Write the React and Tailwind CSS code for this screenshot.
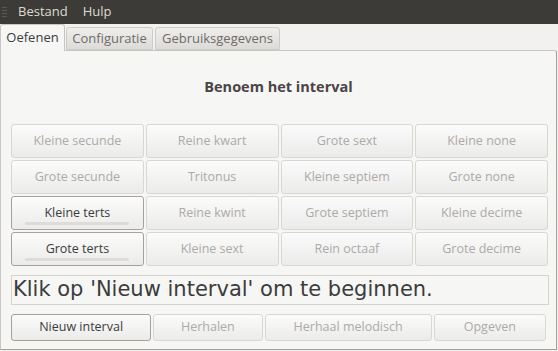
import React from "react";

const intervals = [
  ["Kleine secunde", false],
  ["Reine kwart", false],
  ["Grote sext", false],
  ["Kleine none", false],
  ["Grote secunde", false],
  ["Tritonus", false],
  ["Kleine septiem", false],
  ["Grote none", false],
  ["Kleine terts", true],
  ["Reine kwint", false],
  ["Grote septiem", false],
  ["Kleine decime", false],
  ["Grote terts", true],
  ["Kleine sext", false],
  ["Rein octaaf", false],
  ["Grote decime", false],
];

const actions = [
  ["Nieuw interval", true, "w-[141px]"],
  ["Herhalen", false, "w-[110px]"],
  ["Herhaal melodisch", false, "w-[168px]"],
  ["Opgeven", false, "w-[113px]"],
];

function GtkButton({ label, active, className, bar }) {
  return (
    <div
      className={
        "relative flex items-center justify-center rounded-[3px] border bg-gradient-to-b from-[#fbfbfb] to-[#ebebea] " +
        (active
          ? "border-[#a8a09b] text-[#3c3c3c] "
          : "border-[#dad7d3] text-[#adaaa7] ") +
        (className || "")
      }
    >
      <span>{label}</span>
      {bar && (
        <div className="absolute bottom-[4px] left-[13px] right-[14px] h-[3px] rounded-full bg-[#dddcda]" />
      )}
    </div>
  );
}

export default function App() {
  return (
    <div
      className="w-[558px] h-[351px] bg-[#f2f1f0] flex flex-col overflow-hidden text-[12.5px]"
      style={{ fontFamily: "'Open Sans', 'Noto Sans', sans-serif" }}
    >
      {/* Menu bar */}
      <div className="h-[24px] bg-[#3c3b37] flex items-center text-[#dfdbd2] text-[13px]">
        <div className="ml-[2px] w-[5px] h-[12px] flex flex-col justify-between py-[1px]">
          <div className="h-px bg-[#5a5954]" />
          <div className="h-px bg-[#5a5954]" />
          <div className="h-px bg-[#5a5954]" />
          <div className="h-px bg-[#5a5954]" />
        </div>
        <span className="ml-[11px]">Bestand</span>
        <span className="ml-[15px]">Hulp</span>
      </div>

      {/* Tabs */}
      <div className="h-[26px] flex items-end relative z-10">
        <div className="w-[65px] h-[27px] -mb-px flex items-center justify-center bg-[#f6f6f5] border border-b-0 border-[#c9c6c2] rounded-t-[3px] text-[#3c3c3c] text-[13px]">
          Oefenen
        </div>
        <div className="ml-[1px] w-[87px] h-[23px] flex items-center justify-center bg-gradient-to-b from-[#efeeed] to-[#dddbd8] border border-[#cfccc8] rounded-t-[3px] text-[#6e6b68] text-[13px]">
          Configuratie
        </div>
        <div className="ml-[2px] w-[125px] h-[23px] flex items-center justify-center bg-gradient-to-b from-[#efeeed] to-[#dddbd8] border border-[#cfccc8] rounded-t-[3px] text-[#6e6b68] text-[13px]">
          Gebruiksgegevens
        </div>
      </div>

      {/* Pane */}
      <div className="w-[557px] h-[300px] bg-[#f6f6f5] border border-[#c9c6c2] border-r-[#a3a09c] border-b-[#a3a09c] rounded-tr-[3px] flex flex-col px-[10px]">
        <div className="mt-[26px] h-[20px] flex items-center justify-center font-bold text-[14.5px] text-[#4a4446]">
          Benoem het interval
        </div>

        <div className="mt-[27px] grid grid-cols-4 gap-[2px] w-[537px]">
          {intervals.map(([label, active]) => (
            <GtkButton
              key={label}
              label={label}
              active={active}
              bar={active}
              className="h-[34px]"
            />
          ))}
        </div>

        <div
          className="mt-[9px] w-[538px] h-[30px] border border-[#d6d3cf] flex items-center pl-[1px] text-[21px] text-[#3c3c3c] overflow-hidden whitespace-nowrap"
          style={{ fontFamily: "'DejaVu Sans', sans-serif" }}
        >
          Klik op 'Nieuw interval' om te beginnen.
        </div>

        <div className="mt-[9px] flex gap-[2px]">
          {actions.map(([label, active, w]) => (
            <GtkButton
              key={label}
              label={label}
              active={active}
              className={"h-[27px] " + w}
            />
          ))}
        </div>
      </div>
    </div>
  );
}
